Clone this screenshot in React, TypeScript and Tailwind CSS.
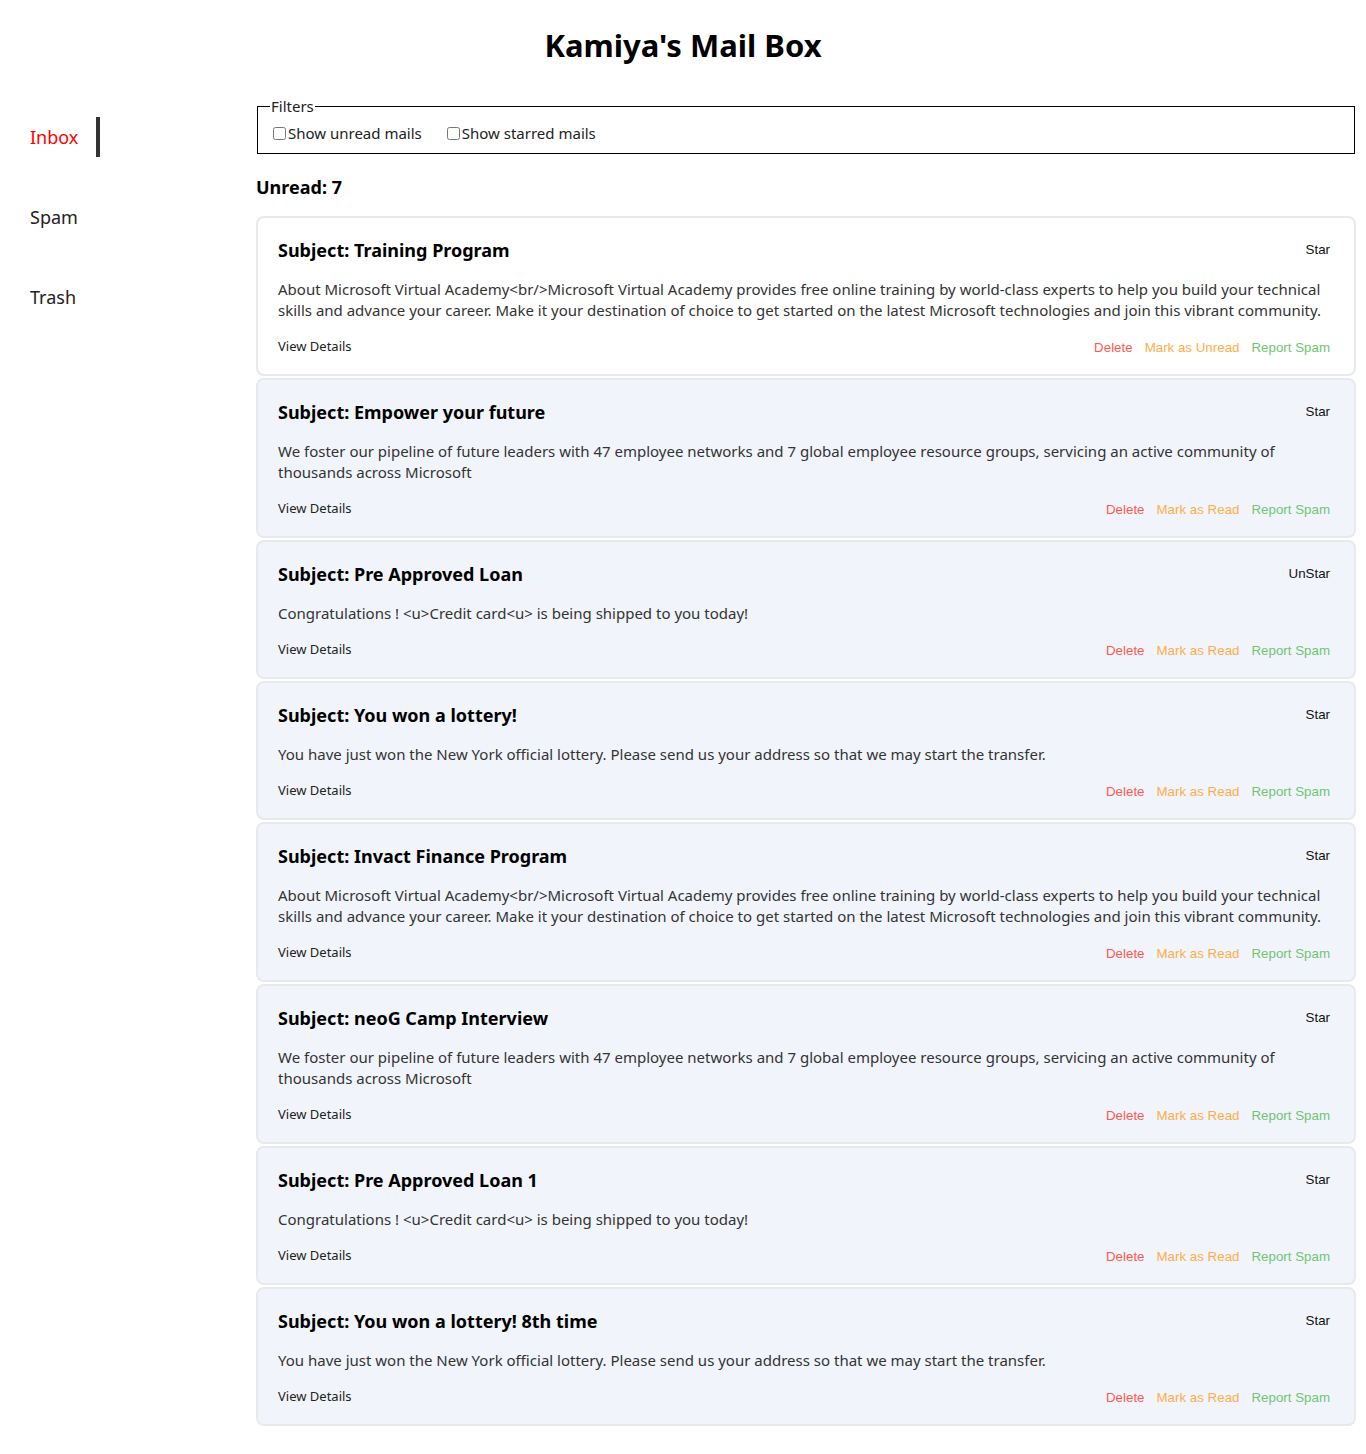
import React from "react";

type Mail = { subject: string; body: string; read: boolean; star: boolean };

const A =
  "About Microsoft Virtual Academy<br/>Microsoft Virtual Academy provides free online training by world-class experts to help you build your technical skills and advance your career. Make it your destination of choice to get started on the latest Microsoft technologies and join this vibrant community.";
const B =
  "We foster our pipeline of future leaders with 47 employee networks and 7 global employee resource groups, servicing an active community of thousands across Microsoft";
const C = "Congratulations ! <u>Credit card<u> is being shipped to you today!";
const D =
  "You have just won the New York official lottery. Please send us your address so that we may start the transfer.";

const mails: Mail[] = [
  { subject: "Training Program", body: A, read: true, star: false },
  { subject: "Empower your future", body: B, read: false, star: false },
  { subject: "Pre Approved Loan", body: C, read: false, star: true },
  { subject: "You won a lottery!", body: D, read: false, star: false },
  { subject: "Invact Finance Program", body: A, read: false, star: false },
  { subject: "neoG Camp Interview", body: B, read: false, star: false },
  { subject: "Pre Approved Loan 1", body: C, read: false, star: false },
  { subject: "You won a lottery! 8th time", body: D, read: false, star: false },
];

const font = { fontFamily: '"Noto Sans", "Open Sans", sans-serif' };

function MailCard({ m }: { m: Mail }) {
  return (
    <div
      className={`rounded-lg border-2 border-[#e8e9ec] px-5 pt-[18px] pb-[17px] ${
        m.read ? "bg-white" : "bg-[#f1f5fb]"
      }`}
    >
      <div className="flex items-start justify-between">
        <h3 className="text-[18px] font-bold leading-[28px] text-black">Subject: {m.subject}</h3>
        <button className="mr-[4px] mt-[4px] font-['Liberation_Sans',Arial,sans-serif] text-[13.33px] leading-[20px] text-[#111]">
          {m.star ? "UnStar" : "Star"}
        </button>
      </div>
      <p className="mt-[15px] text-[15px] leading-[21px] text-[#333]">{m.body}</p>
      <div className="mt-[16px] flex items-start justify-between">
        <span className="text-[13px] leading-[18px] text-[#222]">View Details</span>
        <div className="mr-[4px] flex gap-3 pt-[2px] font-['Liberation_Sans',Arial,sans-serif] text-[13.33px] leading-[18px]">
          <button className="text-[#ff5a4f]">Delete</button>
          <button className="text-[#ffad4a]">{m.read ? "Mark as Unread" : "Mark as Read"}</button>
          <button className="text-[#72c472]">Report Spam</button>
        </div>
      </div>
    </div>
  );
}

export default function App() {
  return (
    <div className="min-h-[1454px] bg-white text-black" style={font}>
      <h1 className="pt-[24px] text-center text-[31px] font-bold leading-[42px]">Kamiya's Mail Box</h1>
      <div className="mt-[40px] flex">
        <nav className="mt-[11px] flex w-[256px] shrink-0 flex-col items-start gap-[40px] pl-[30px]">
          <a className="border-r-4 border-[#333] py-[8px] pr-[18px] text-[18px] leading-[24px] text-[#ff0000]">Inbox</a>
          <a className="py-[8px] text-[18px] leading-[24px] text-[#222]">Spam</a>
          <a className="py-[8px] text-[18px] leading-[24px] text-[#222]">Trash</a>
        </nav>
        <main className="mr-[10px] flex-1">
          <fieldset className="mx-[1px] mt-[-10px] border border-black px-[12px] pb-[10px]">
            <legend className="px-[1px] text-[15px] leading-[20px] text-[#222]">Filters</legend>
            <div className="flex items-center gap-[22px] pt-[7px] text-[15px] leading-[20px] text-[#222]">
              <label className="flex items-center">
                <input type="checkbox" className="ml-[3px] mr-[2px] h-[13px] w-[13px]" />
                Show unread mails
              </label>
              <label className="flex items-center">
                <input type="checkbox" className="ml-[3px] mr-[2px] h-[13px] w-[13px]" />
                Show starred mails
              </label>
            </div>
          </fieldset>
          <div className="mt-[21px] text-[18px] font-bold leading-[24px]">Unread: 7</div>
          <div className="mt-[17px] flex flex-col gap-[2px] pb-[26px]">
            {mails.map((m, i) => (
              <MailCard key={i} m={m} />
            ))}
          </div>
        </main>
      </div>
    </div>
  );
}
